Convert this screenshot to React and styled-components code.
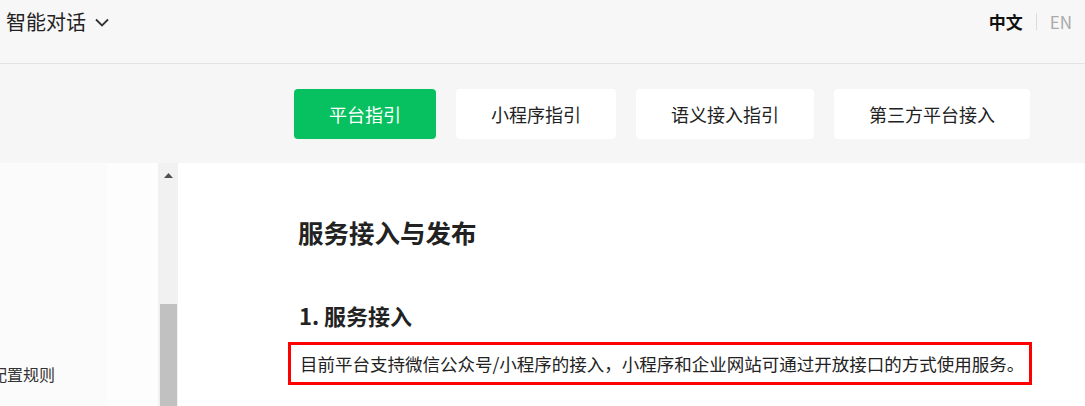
import React from 'react'
import styled, { createGlobalStyle } from 'styled-components'

const GlobalStyle = createGlobalStyle`
  html, body {
    margin: 0;
    padding: 0;
    background: #ffffff;
    font-family: "Noto Sans CJK SC", "Noto Sans", "Liberation Sans", sans-serif;
    color: #333;
  }
  #root {
    height: 406px;
    overflow: hidden;
  }
`

const Page = styled.div`
  display: flex;
  flex-direction: column;
  height: 406px;
`

const Header = styled.header`
  height: 63px;
  flex: 0 0 auto;
  display: flex;
  align-items: center;
  justify-content: space-between;
  padding: 0 13px 0 6px;
  background: #f7f7f7;
  border-bottom: 1px solid #e3e3e3;
`

const Product = styled.div`
  display: flex;
  align-items: center;
  gap: 9px;
  margin-top: -19px;
  font-size: 20px;
  line-height: 20px;
  color: #222;
`

const Lang = styled.div`
  display: flex;
  align-items: center;
  margin-top: -21px;
  font-size: 17px;
`

const LangItem = styled.span`
  color: ${({ active }) => (active ? '#111' : '#aaa')};
  font-weight: ${({ active }) => (active ? 700 : 400)};
`

const LangDivider = styled.span`
  width: 1px;
  height: 17px;
  margin: 0 13px;
  background: #dcdcdc;
`

const TabBar = styled.nav`
  height: 99px;
  flex: 0 0 auto;
  display: flex;
  align-items: center;
  justify-content: flex-end;
  gap: 20px;
  padding-right: 55px;
  background: #f6f6f6;
`

const Tab = styled.button`
  height: 50px;
  padding: 0 35px;
  border: 0;
  border-radius: 4px;
  font-family: inherit;
  font-size: 18px;
  background: ${({ active }) => (active ? '#07c160' : '#ffffff')};
  color: ${({ active }) => (active ? '#ffffff' : '#222')};
  cursor: pointer;
`

const Main = styled.div`
  flex: 1 1 auto;
  display: flex;
  min-height: 0;
`

const Sidebar = styled.aside`
  width: 158px;
  flex: 0 0 auto;
  display: grid;
  grid-template-columns: 107px 1fr;
  overflow: hidden;
`

const SideMenu = styled.div`
  background: #fbfbfb;
  padding-top: 199px;
`

const SideRest = styled.div`
  background: #fdfdfd;
`

const MenuItem = styled.div`
  margin-left: -9px;
  font-size: 16px;
  white-space: nowrap;
  color: #333;
`

const Scrollbar = styled.div`
  width: 20px;
  flex: 0 0 auto;
  display: flex;
  flex-direction: column;
  background: #f1f1f1;
`

const ScrollArrow = styled.div`
  height: 24px;
  display: flex;
  justify-content: center;
  padding-top: 10px;
  box-sizing: border-box;
`

const ScrollThumb = styled.div`
  margin: 117px 1px 0 2px;
  flex: 1;
  background: #c1c1c1;
`

const Article = styled.article`
  flex: 1;
  padding: 51px 0 0 110px;
  background: #ffffff;
`

const Title = styled.h1`
  margin: 0 0 50px 10px;
  font-size: 25.5px;
  line-height: 36px;
  font-weight: 700;
  color: #222;
`

const SubTitle = styled.h2`
  margin: 0 0 12px 11px;
  font-size: 22px;
  line-height: 30px;
  font-weight: 700;
  color: #222;
`

const Highlight = styled.p`
  margin: 0;
  width: 744px;
  box-sizing: border-box;
  padding: 5px 0 5px 9px;
  border: 3px solid #ff0000;
  font-size: 17.5px;
  line-height: 27px;
  color: #222;
  white-space: nowrap;
`

const Chevron = () => (
  <svg width="14" height="9" viewBox="0 0 14 9" fill="none">
    <path d="M1 1.5l6 6 6-6" stroke="#333" strokeWidth="1.8" />
  </svg>
)

const tabs = ['平台指引', '小程序指引', '语义接入指引', '第三方平台接入']

const App = () => {
  return (
    <Page>
      <GlobalStyle />
      <Header>
        <Product>
          智能对话
          <Chevron />
        </Product>
        <Lang>
          <LangItem active>中文</LangItem>
          <LangDivider />
          <LangItem>EN</LangItem>
        </Lang>
      </Header>
      <TabBar>
        {tabs.map((t, i) => (
          <Tab key={t} active={i === 0}>{t}</Tab>
        ))}
      </TabBar>
      <Main>
        <Sidebar>
          <SideMenu>
            <MenuItem>配置规则</MenuItem>
          </SideMenu>
          <SideRest />
        </Sidebar>
        <Scrollbar>
          <ScrollArrow>
            <svg width="9" height="5" viewBox="0 0 9 5">
              <path d="M4.5 0L9 5H0z" fill="#505050" />
            </svg>
          </ScrollArrow>
          <ScrollThumb />
        </Scrollbar>
        <Article>
          <Title>服务接入与发布</Title>
          <SubTitle>1. 服务接入</SubTitle>
          <Highlight>
            目前平台支持微信公众号/小程序的接入，小程序和企业网站可通过开放接口的方式使用服务。
          </Highlight>
        </Article>
      </Main>
    </Page>
  )
}

export default App
